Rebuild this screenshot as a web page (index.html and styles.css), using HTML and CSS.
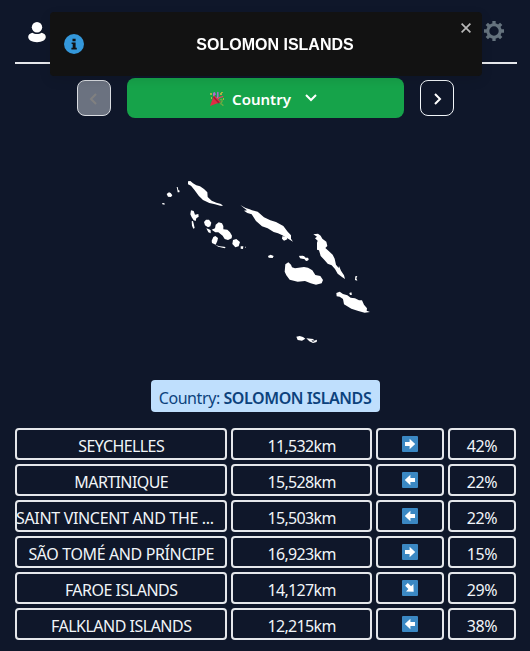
FILE: index.html
```html
<!DOCTYPE html>
<html lang="en">
<head>
<meta charset="utf-8">
<title>Country</title>
<link rel="stylesheet" href="styles.css">
</head>
<body>
<svg class="defs" aria-hidden="true">
  <symbol id="arrow" viewBox="0 0 16 16"><path d="M3 6.1H7.6V2.8L13.2 8L7.6 13.2V9.9H3Z" fill="#fff"/></symbol>
</svg>
<main class="app">
  <header class="header">
    <svg class="user" viewBox="0 0 18 21"><circle cx="9" cy="5.3" r="5.2" fill="#fff"/><path d="M4.3 10.7C6.8 12.5 11.2 12.5 13.7 10.7C16.2 11.3 17.8 13 17.8 15C17.8 18 14 20.2 9 20.2S.2 18 .2 15C.2 13 1.8 11.3 4.3 10.7Z" fill="#fff"/></svg>
    <svg class="gear" viewBox="0 0 20 20"><g fill="none" stroke="#65737e"><circle cx="10" cy="10" r="6.2" stroke-width="3"/><path d="M10 0V3.5M10 16.5V20M0 10H3.5M16.5 10H20M2.8 2.8L5.5 5.5M14.5 14.5L17.2 17.2M2.8 17.2L5.5 14.5M14.5 5.5L17.2 2.8" stroke-width="3.3"/></g></svg>
  </header>
  <nav class="rounds">
    <button class="step disabled"><svg viewBox="0 0 16 16"><path d="M10 3L5 8L10 13"/></svg></button>
    <button class="current">
      <svg class="party" viewBox="0 0 16 16"><path d="M1 15L5 4L12 11Z" fill="#dd2e44"/><path d="M4.5 6L10 12" stroke="#a51834" stroke-width="1.5"/><path d="M5 5C4 1 6 1 6 4M8 7C10 5 8 3 9 1" fill="none" stroke="#aa70cc" stroke-width="1.5"/><path d="M9 8C10 5 13 7 14 5" fill="none" stroke="#ec4260" stroke-width="1.4"/><path d="M11 9C13 7 14 10 12 12C11 14 14 12 14 15" fill="none" stroke="#69ad42" stroke-width="1.4"/><path d="M1 3H3M11 3H13M13 1V2M14 8H15M2 7H3" stroke="#d9bd3c" stroke-width="1.5"/></svg>
      <span class="current-label">Country</span>
      <svg class="down" viewBox="0 0 12 8"><path d="M1 1L6 6L11 1"/></svg>
    </button>
    <button class="step"><svg viewBox="0 0 16 16"><path d="M6 3L11 8L6 13"/></svg></button>
  </nav>
  <svg class="map" viewBox="155 170 220 180" fill="#fff">
    <g transform="translate(155 170) scale(.33333)">
      <path d="M99 34L106 33L114 40L124 46L135 49L147 57L157 67L158 81L170 92L184 98L198 102L204 108L196 107L180 103L163 99L144 90L131 77L119 61L108 47L99 43Z"/>
      <path d="M35 72L42 67L47 69L52 76L48 81L39 80ZM21 100L28 99L29 104L22 103ZM65 51L68 51L70 60L74 62L73 67L68 67L67 60Z"/>
      <path d="M108 121L116 123L120 134L130 132L131 140L124 145L122 153L116 151L110 142L106 133ZM110 154L114 153L117 165L119 174L115 176L111 167Z"/>
      <path d="M147 156L153 149L162 149L169 158L166 169L159 172L150 166ZM154 175L162 178L167 181L167 190L160 187ZM170 179L180 175L182 164L191 157L201 160L205 168L205 178L217 179L225 187L231 197L230 205L219 210L209 207L203 197L190 187L181 187Z"/>
      <path d="M170 212L175 201L181 198L189 204L187 213L182 224L171 219ZM181 225L194 229L208 230L212 232L209 235L190 230ZM234 210L244 207L255 216L251 229L241 232L232 222ZM257 229L265 229L264 237L257 236ZM270 230H272V233H270Z"/>
    </g>
    <g transform="translate(235 195) scale(.33333)">
      <path d="M16 30L25 35L32 39L44 43L51 46L68 50L87 67L106 76L123 81L145 93L158 110L168 121L168 131L174 140L157 130L142 121L129 115L116 111L98 100L81 94L63 78L50 58L37 54L27 47L36 46L27 39Z"/>
      <path d="M142 124L155 125L157 133L147 137L141 131ZM99 183L107 179L116 183L113 189L101 188ZM193 182L207 183L212 189L221 191L216 198L208 192L195 190Z"/>
    </g>
    <g transform="translate(295 225) scale(.33333)">
      <path d="M55 28L69 26L77 32L82 41L94 50L97 63L91 69L101 78L113 89L119 101L123 119L131 129L132 123L138 137L147 151L150 162L142 157L128 146L120 132L110 121L98 116L89 106L77 93L72 76L66 74L66 53L68 47L60 40L66 35Z"/>
      <path d="M-29 118L-20 112L-12 119L-9 127L0 130L27 126L39 128L52 136L61 150L76 153L84 165L80 175L63 179L47 175L30 168L8 170L-16 164L-26 151L-31 140Z"/>
      <path d="M12 94L23 92L31 98L39 98L41 105L33 108L28 101L16 99ZM181 154L187 153L184 160L187 167L180 165ZM163 204L169 202L171 209L165 210Z"/>
      <path d="M124 204L134 200L144 207L157 211L167 218L180 220L192 226L201 226L207 239L216 250L215 257L225 261L209 263L190 258L169 251L147 238L144 222L134 215L125 214Z"/>
      <path fill-rule="evenodd" d="M4 335L14 333L24 336L31 341L21 347L8 345ZM34 340L55 342L57 347L66 344L65 351L54 354L43 349ZM49 347L54 350L58 349L54 346Z"/>
    </g>
  </svg>
  <div class="answer">Country: <b>SOLOMON ISLANDS</b></div>
  <section class="guesses">
    <div class="cell n1">SEYCHELLES</div><div class="cell km">11,532km</div><div class="cell"><svg class="dir"><use href="#arrow"/></svg></div><div class="cell pct">42%</div>
    <div class="cell n2">MARTINIQUE</div><div class="cell km">15,528km</div><div class="cell"><svg class="dir west"><use href="#arrow"/></svg></div><div class="cell pct">22%</div>
    <div class="cell n3">SAINT VINCENT AND THE ...</div><div class="cell km">15,503km</div><div class="cell"><svg class="dir west"><use href="#arrow"/></svg></div><div class="cell pct">22%</div>
    <div class="cell n4">SÃO TOMÉ AND PRÍNCIPE</div><div class="cell km">16,923km</div><div class="cell"><svg class="dir"><use href="#arrow"/></svg></div><div class="cell pct">15%</div>
    <div class="cell n5">FAROE ISLANDS</div><div class="cell km">14,127km</div><div class="cell"><svg class="dir southeast"><use href="#arrow"/></svg></div><div class="cell pct">29%</div>
    <div class="cell n6">FALKLAND ISLANDS</div><div class="cell km">12,215km</div><div class="cell"><svg class="dir west"><use href="#arrow"/></svg></div><div class="cell pct">38%</div>
  </section>
</main>
<aside class="toast">
  <svg class="info" viewBox="0 0 20 20"><circle cx="10" cy="10" r="10" fill="#3498db"/><path d="M8.5 4.8H11.6V7.2H8.5ZM7.6 8.4H11.6V13.8H12.8V15.4H7.4V13.8H8.7V10H7.6Z" fill="#121212"/></svg>
  <strong class="toast-text">SOLOMON ISLANDS</strong>
  <svg class="close" viewBox="0 0 10 10"><path d="M.6.6L9.4 9.4M9.4.6L.6 9.4" stroke="#b8b8b8" stroke-width="1.7"/></svg>
</aside>
</body>
</html>
```
FILE: styles.css
```css
* { box-sizing: border-box; }
body { margin: 0; background: #0f172a; color: #f1f5f9; font: 16px/24px "Noto Sans", sans-serif; overflow: hidden; }
.defs { display: none; }
.app { display: flex; flex-direction: column; align-items: center; width: 502px; margin-left: 15px; }
.header { display: flex; justify-content: space-between; width: 100%; height: 64px; padding: 21px 13px 0; border-bottom: 2px solid #e5e7eb; }
.user { width: 18px; height: 21px; margin-top: 1px; }
.gear { width: 20px; height: 20px; }
.rounds { display: flex; align-items: center; gap: 16px; margin: 14px 0 0 -1px; }
.step { display: grid; place-items: center; width: 34px; height: 36px; padding: 0; border: 1px solid #f1f5f9; border-radius: 8px; background: transparent; }
.step svg { width: 16px; height: 16px; margin-top: 2px; fill: none; stroke: #fff; stroke-width: 2; }
.disabled { background: #6b7280; border-color: #d9dce1; }
.disabled svg { stroke: #808080; }
.current { display: flex; align-items: center; justify-content: center; width: 277px; height: 40px; padding: 2px 5px 0 0; border: 0; border-radius: 8px; background: #16a34a; color: #fff; font: 600 15px/24px "Noto Sans", sans-serif; }
.party { width: 16px; height: 16px; margin-right: 7px; }
.down { width: 12px; height: 8px; margin: 0 0 3px 14px; fill: none; stroke: #fff; stroke-width: 2; }
.map { width: 220px; height: 180px; margin-top: 52px; margin-left: -2px; }
.answer { width: 229px; height: 32px; margin: 30px 2px 0 0; padding-top: 6px; border-radius: 4px; background: #bfdffd; color: #0c427c; text-align: center; white-space: nowrap; letter-spacing: -.42px; }
.answer b { font-weight: 600; }
.guesses { display: grid; grid-template-columns: repeat(7, 1fr); grid-auto-rows: 32px; gap: 4px; width: 501px; margin: 16px 1px 0 0; }
.cell { display: flex; align-items: center; justify-content: center; min-width: 0; border: 2px solid #e5e7eb; border-radius: 4px; white-space: nowrap; padding-top: 4px; letter-spacing: -.5px; }
.cell:nth-child(4n+1) { grid-column: span 3; }
.cell.km { grid-column: span 2; letter-spacing: -.65px; }
.cell.n1, .cell.n2 { letter-spacing: -.6px; }
.cell.n3 { justify-content: flex-start; letter-spacing: -.33px; text-indent: -1px; }
.cell.n4 { letter-spacing: -.38px; }
.dir { width: 16px; height: 16px; border-radius: 1px; background: #3b88c3; margin-top: -4px; }
.west { transform: rotate(180deg); }
.southeast use { transform: rotate(45deg); transform-origin: 8px 8px; }
.toast { position: fixed; left: 50px; top: 12px; display: flex; align-items: center; width: 432px; height: 64px; padding: 0 11px 0 14px; border-radius: 4px; background: #121212; color: #fff; box-shadow: 0 4px 12px rgba(0, 0, 0, .1); }
.info { width: 20px; height: 20px; }
.toast-text { flex: 1; padding: 2px 0 0 5px; text-align: center; font: 700 16px/24px "Liberation Sans", sans-serif; }
.close { width: 10px; height: 10px; align-self: flex-start; margin-top: 11px; }
```
